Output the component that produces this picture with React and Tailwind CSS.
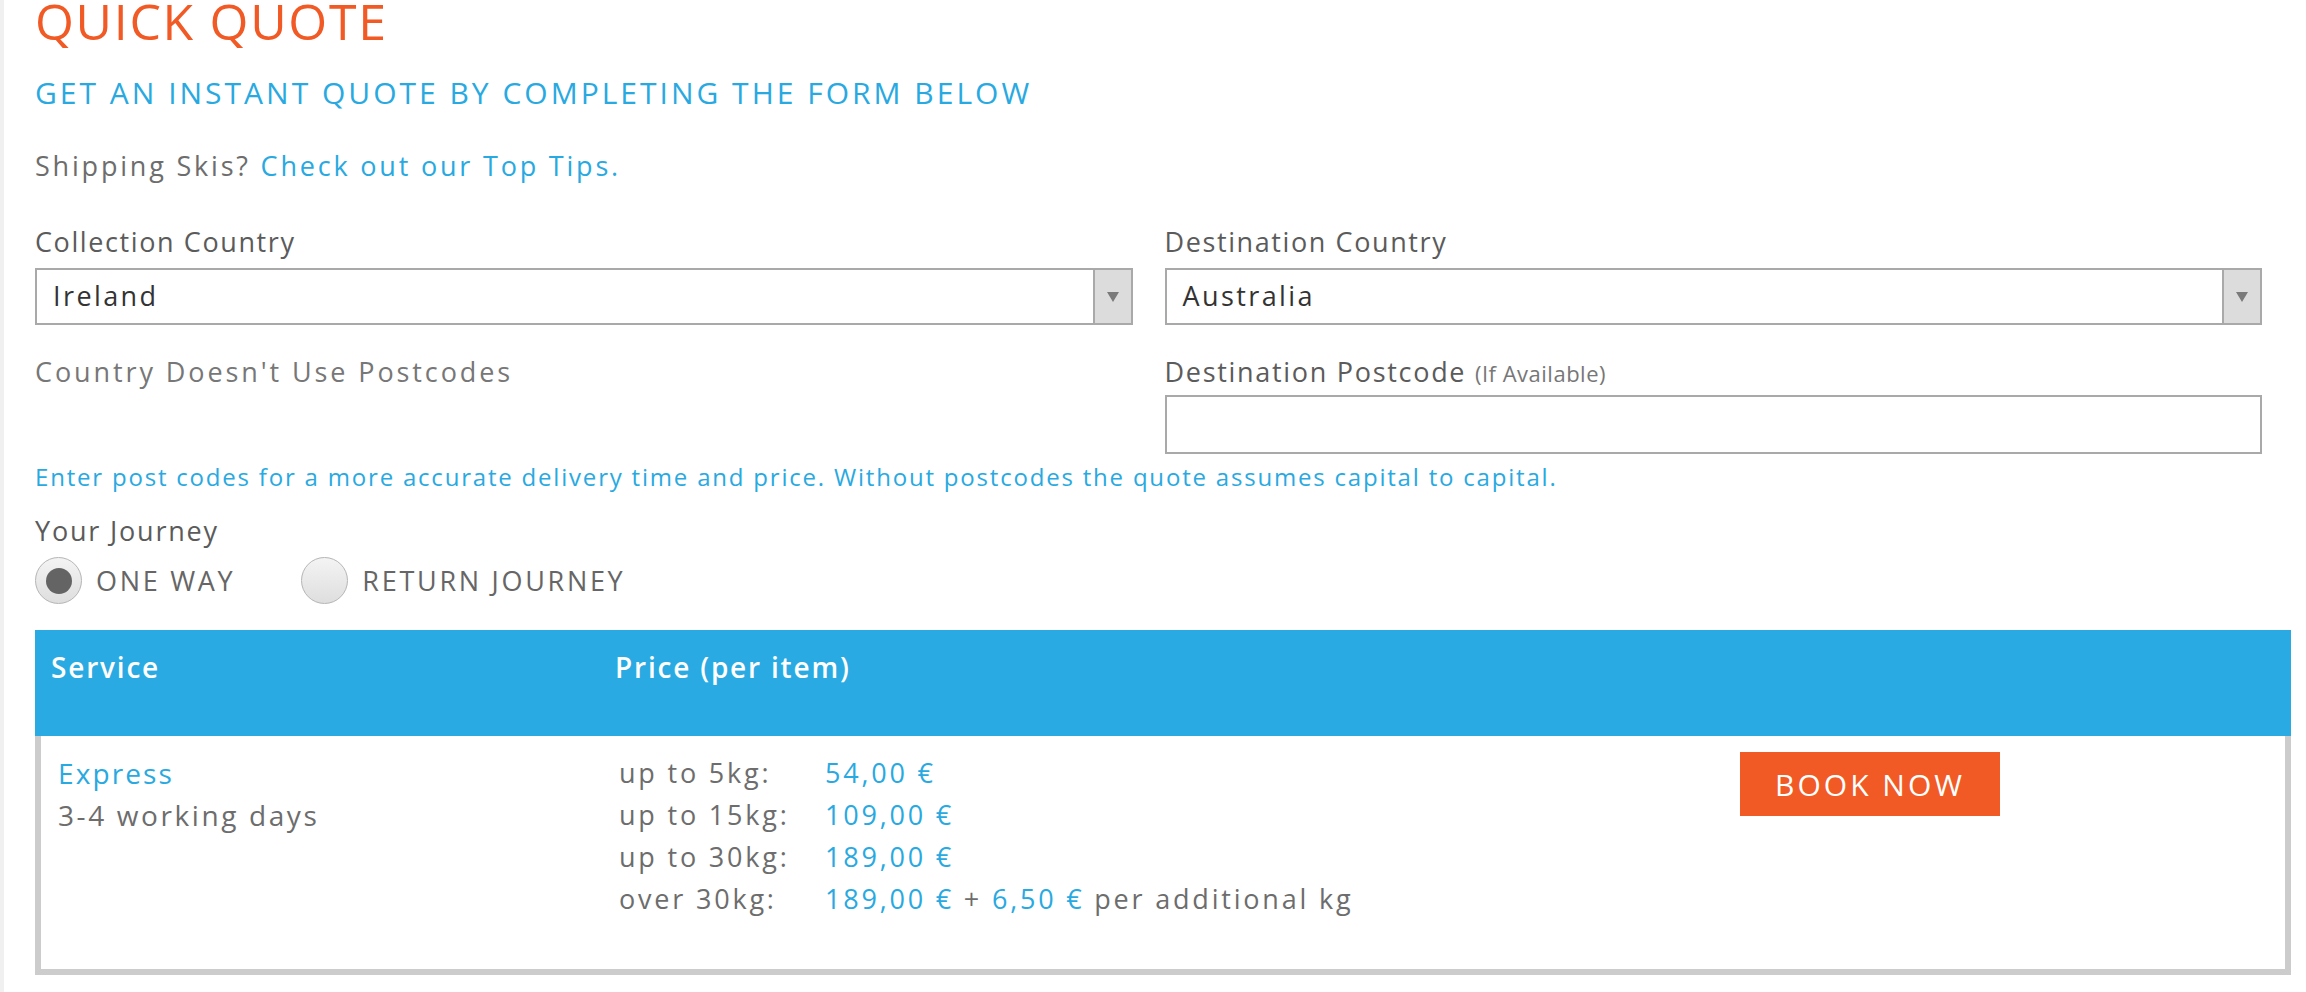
const font = { fontFamily: '"Open Sans", "DejaVu Sans", sans-serif' }

function Select({ value }) {
  return (
    <div className="flex h-[57px] w-full border-2 border-[#a9a9a9] bg-white">
      <div className="flex flex-1 items-center pl-[16px] text-[27px] tracking-[2.4px] text-[#333]">{value}</div>
      <div className="flex w-[38px] items-center justify-center border-l-2 border-[#a9a9a9] bg-[#dcdcdc]">
        <svg width="12" height="10" viewBox="0 0 12 10">
          <path d="M0 0 L12 0 L6 10 Z" fill="#7a7a7a" />
        </svg>
      </div>
    </div>
  )
}

function Radio({ checked, label }) {
  return (
    <label className="flex items-center gap-[14px]">
      <span className="flex h-[47px] w-[47px] items-center justify-center rounded-full border border-[#b5b5b5] bg-gradient-to-b from-[#f4f4f4] to-[#dedede]">
        {checked && <span className="h-[26px] w-[26px] rounded-full bg-[#646464]" />}
      </span>
      <span className="text-[27px] leading-[40px] tracking-[2.7px] text-[#666]">{label}</span>
    </label>
  )
}

const prices = [
  { label: 'up to 5kg:', value: '54,00 €' },
  { label: 'up to 15kg:', value: '109,00 €' },
  { label: 'up to 30kg:', value: '189,00 €' },
]

export default function App() {
  return (
    <div className="min-h-screen border-l-4 border-[#f0f0f0] bg-white" style={font}>
      <div className="w-[2258px] pl-[31px]">
        <h1 className="text-[50px] leading-[42px] font-normal tracking-[1.7px] text-[#f15a24]">QUICK QUOTE</h1>
        <h2 className="mt-[31px] text-[30px] leading-[40px] font-medium tracking-[3px] text-[#29a9e1]">
          GET AN INSTANT QUOTE BY COMPLETING THE FORM BELOW
        </h2>
        <p className="mt-[33px] text-[27px] leading-[40px] tracking-[2.8px] text-[#6d6d6d]">
          Shipping Skis? <a className="text-[#29a9e1]">Check out our Top Tips.</a>
        </p>

        <div className="mt-[36px] grid grid-cols-2 gap-x-[32px]">
          <div>
            <label className="block text-[27px] leading-[40px] tracking-[1.6px] text-[#5b5b5b]">Collection Country</label>
            <div className="mt-[6px]">
              <Select value="Ireland" />
            </div>
            <p className="mt-[27px] text-[27px] leading-[40px] tracking-[2.9px] text-[#777]">Country Doesn't Use Postcodes</p>
          </div>
          <div>
            <label className="block text-[27px] leading-[40px] tracking-[1.6px] text-[#5b5b5b]">Destination Country</label>
            <div className="mt-[6px]">
              <Select value="Australia" />
            </div>
            <label className="mt-[27px] block text-[27px] leading-[40px] tracking-[1.7px] text-[#5b5b5b]">
              Destination Postcode{' '}
              <span className="text-[22px] tracking-[0.5px] text-[#777]">(If Available)</span>
            </label>
            <input className="mt-[2px] block h-[59px] w-full border-2 border-[#a9a9a9] bg-white outline-none" />
          </div>
        </div>

        <p className="mt-[6px] text-[24px] leading-[34px] font-medium tracking-[1.8px] text-[#29a9e1]">
          Enter post codes for a more accurate delivery time and price. Without postcodes the quote assumes capital to capital.
        </p>

        <p className="mt-[17px] text-[27px] leading-[40px] tracking-[1.8px] text-[#5b5b5b]">Your Journey</p>
        <div className="mt-[6px] flex items-center gap-[66px]">
          <Radio checked label="ONE WAY" />
          <Radio label="RETURN JOURNEY" />
        </div>
      </div>

      <div className="ml-[31px] mt-[26px] w-[2256px]">
        <div className="flex h-[106px] bg-[#29aae2] pl-[16px] pt-[17px] text-[28px] leading-[40px] font-semibold tracking-[1.8px] text-white">
          <div className="w-[564px]">Service</div>
          <div>Price (per item)</div>
        </div>
        <div className="flex border-x-[6px] border-b-[6px] border-[#cccccc] pb-[49px] pl-[17px] pt-[16px]">
          <div className="w-[561px] text-[28px] leading-[42px]">
            <div className="font-medium tracking-[2.1px] text-[#29a9e1]">Express</div>
            <div className="tracking-[2.6px] text-[#6d6d6d]">3-4 working days</div>
          </div>
          <div className="w-[1121px] text-[27px] leading-[42px] tracking-[2.8px] text-[#6d6d6d]">
            {prices.map((p) => (
              <div key={p.label} className="flex">
                <span className="w-[206px]">{p.label}</span>
                <span className="font-medium text-[#29a9e1]">{p.value}</span>
              </div>
            ))}
            <div className="flex">
              <span className="w-[206px]">over 30kg:</span>
              <span>
                <span className="font-medium text-[#29a9e1]">189,00 €</span> +{' '}
                <span className="font-medium text-[#29a9e1]">6,50 €</span> per additional kg
              </span>
            </div>
          </div>
          <div>
            <button className="h-[64px] w-[260px] bg-[#f15a24] text-[30px] tracking-[3px] text-white">BOOK NOW</button>
          </div>
        </div>
      </div>
    </div>
  )
}
